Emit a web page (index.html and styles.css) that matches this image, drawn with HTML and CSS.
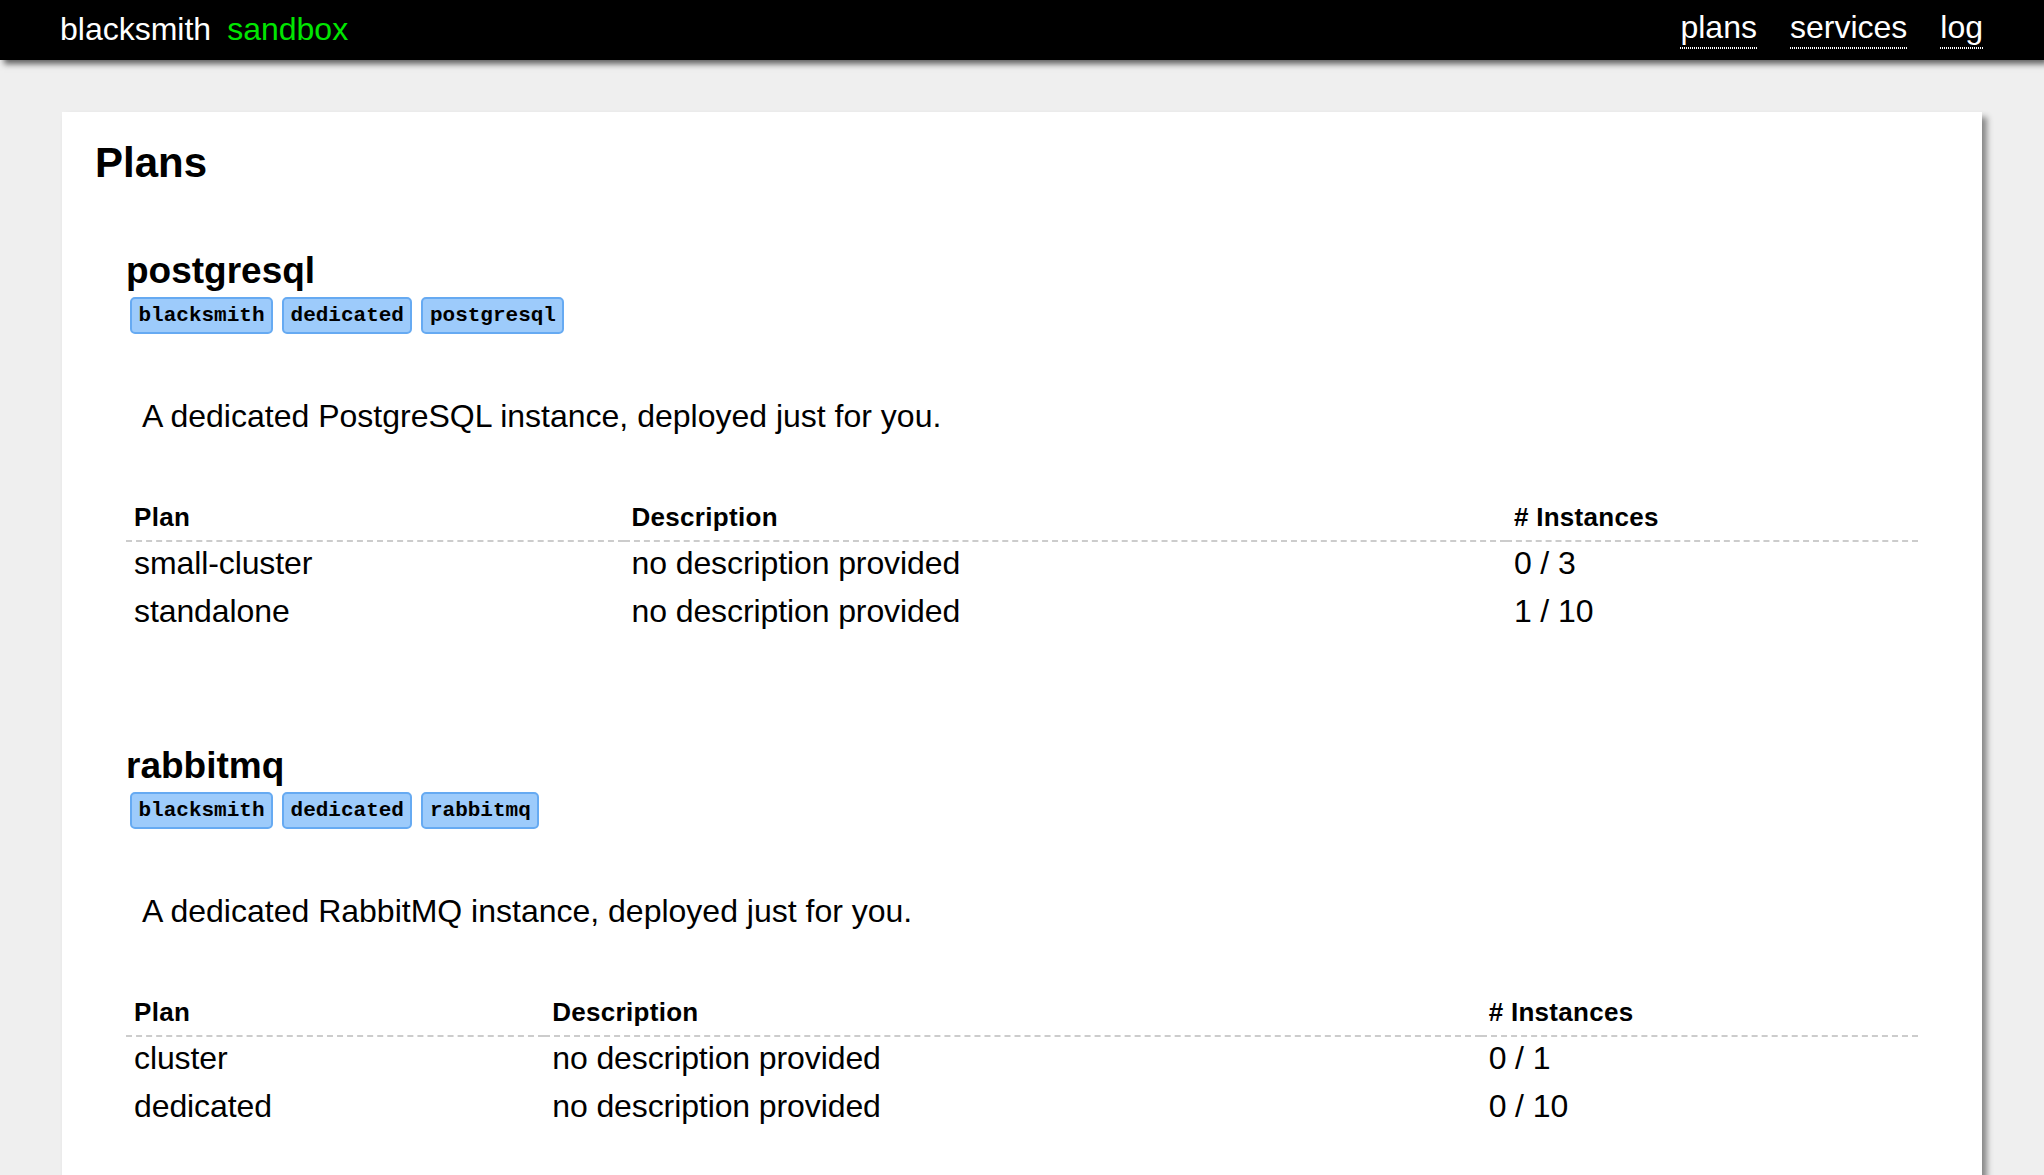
FILE: index.html
```html
<!DOCTYPE html>
<html lang="en">
<head>
<meta charset="utf-8">
<title>blacksmith sandbox - Plans</title>
<link rel="stylesheet" href="styles.css">
</head>
<body>
<header class="topbar">
  <div class="brand">blacksmith<span class="env">sandbox</span></div>
  <nav class="nav">
    <a href="#plans">plans</a>
    <a href="#services">services</a>
    <a href="#log">log</a>
  </nav>
</header>
<main class="card">
  <h1 class="title">Plans</h1>

  <section class="service">
    <h2 class="service-name">postgresql</h2>
    <div class="tags">
      <span class="tag">blacksmith</span>
      <span class="tag">dedicated</span>
      <span class="tag">postgresql</span>
    </div>
    <p class="service-desc">A dedicated PostgreSQL instance, deployed just for you.</p>
    <table class="plans">
      <thead>
        <tr><th>Plan</th><th>Description</th><th># Instances</th></tr>
      </thead>
      <tbody>
        <tr><td>small-cluster</td><td>no description provided</td><td>0 / 3</td></tr>
        <tr><td>standalone</td><td>no description provided</td><td>1 / 10</td></tr>
      </tbody>
    </table>
  </section>

  <section class="service">
    <h2 class="service-name">rabbitmq</h2>
    <div class="tags">
      <span class="tag">blacksmith</span>
      <span class="tag">dedicated</span>
      <span class="tag">rabbitmq</span>
    </div>
    <p class="service-desc">A dedicated RabbitMQ instance, deployed just for you.</p>
    <table class="plans">
      <thead>
        <tr><th>Plan</th><th>Description</th><th># Instances</th></tr>
      </thead>
      <tbody>
        <tr><td>cluster</td><td>no description provided</td><td>0 / 1</td></tr>
        <tr><td>dedicated</td><td>no description provided</td><td>0 / 10</td></tr>
      </tbody>
    </table>
  </section>
</main>
</body>
</html>
```

FILE: styles.css
```css
html, body {
  margin: 0;
  padding: 0;
}

body {
  background: #efefef;
  font-family: "Liberation Sans", Arial, Helvetica, sans-serif;
  color: #000;
}

/* top bar */
.topbar {
  display: flex;
  justify-content: space-between;
  align-items: flex-start;
  height: 60px;
  padding: 0 61px 0 60px;
  background: #000;
  box-shadow: 4px 4px 6px rgba(0, 0, 0, 0.6);
}

.brand {
  font-size: 32px;
  line-height: 37px;
  padding-top: 11px;
  color: #fff;
}

.env {
  margin-left: 16px;
  color: #00e600;
}

.nav {
  display: flex;
  gap: 33px;
  padding-top: 9px;
}

.nav a {
  display: block;
  font-size: 32px;
  line-height: 37px;
  padding-bottom: 3px;
  color: #fff;
  text-decoration: none;
  background: repeating-linear-gradient(to right, #fff 0 1px, transparent 1px 2px) left bottom / 100% 2px no-repeat;
}

/* content card */
.card {
  margin: 52px 62px 0;
  padding: 26px 32px 40px 33px;
  background: #fff;
  box-shadow: 5px 5px 6px #888;
}

.title {
  margin: 0;
  font-size: 42px;
  line-height: 50px;
  font-weight: bold;
}

.service {
  padding: 62px 32px 45px 31px;
}

.service-name {
  margin: 0;
  font-size: 37px;
  line-height: 42px;
  font-weight: bold;
}

.tags {
  display: flex;
  gap: 9px;
  margin: 5px 0 0 4px;
}

.tag {
  font-family: "Liberation Mono", "Courier New", monospace;
  font-size: 21px;
  font-weight: bold;
  line-height: 25px;
  padding: 4px 6.5px;
  border: 2px solid #66aaf2;
  border-radius: 5px;
  background: #9dcbfb;
  color: #000;
}

.service-desc {
  margin: 62px 0 0 16px;
  font-size: 32px;
  line-height: 40px;
}

.plans {
  width: 100%;
  margin-top: 66px;
  border-collapse: separate;
  border-spacing: 0;
}

.plans th {
  text-align: left;
  font-size: 26px;
  line-height: 30px;
  font-weight: bold;
  letter-spacing: 0.3px;
  padding: 0 8px 8px;
  border-bottom: 2px dashed #cccccc;
}

.plans td {
  text-align: left;
  font-size: 32px;
  line-height: 42px;
  letter-spacing: -0.1px;
  padding: 0 8px 6px;
}
```
